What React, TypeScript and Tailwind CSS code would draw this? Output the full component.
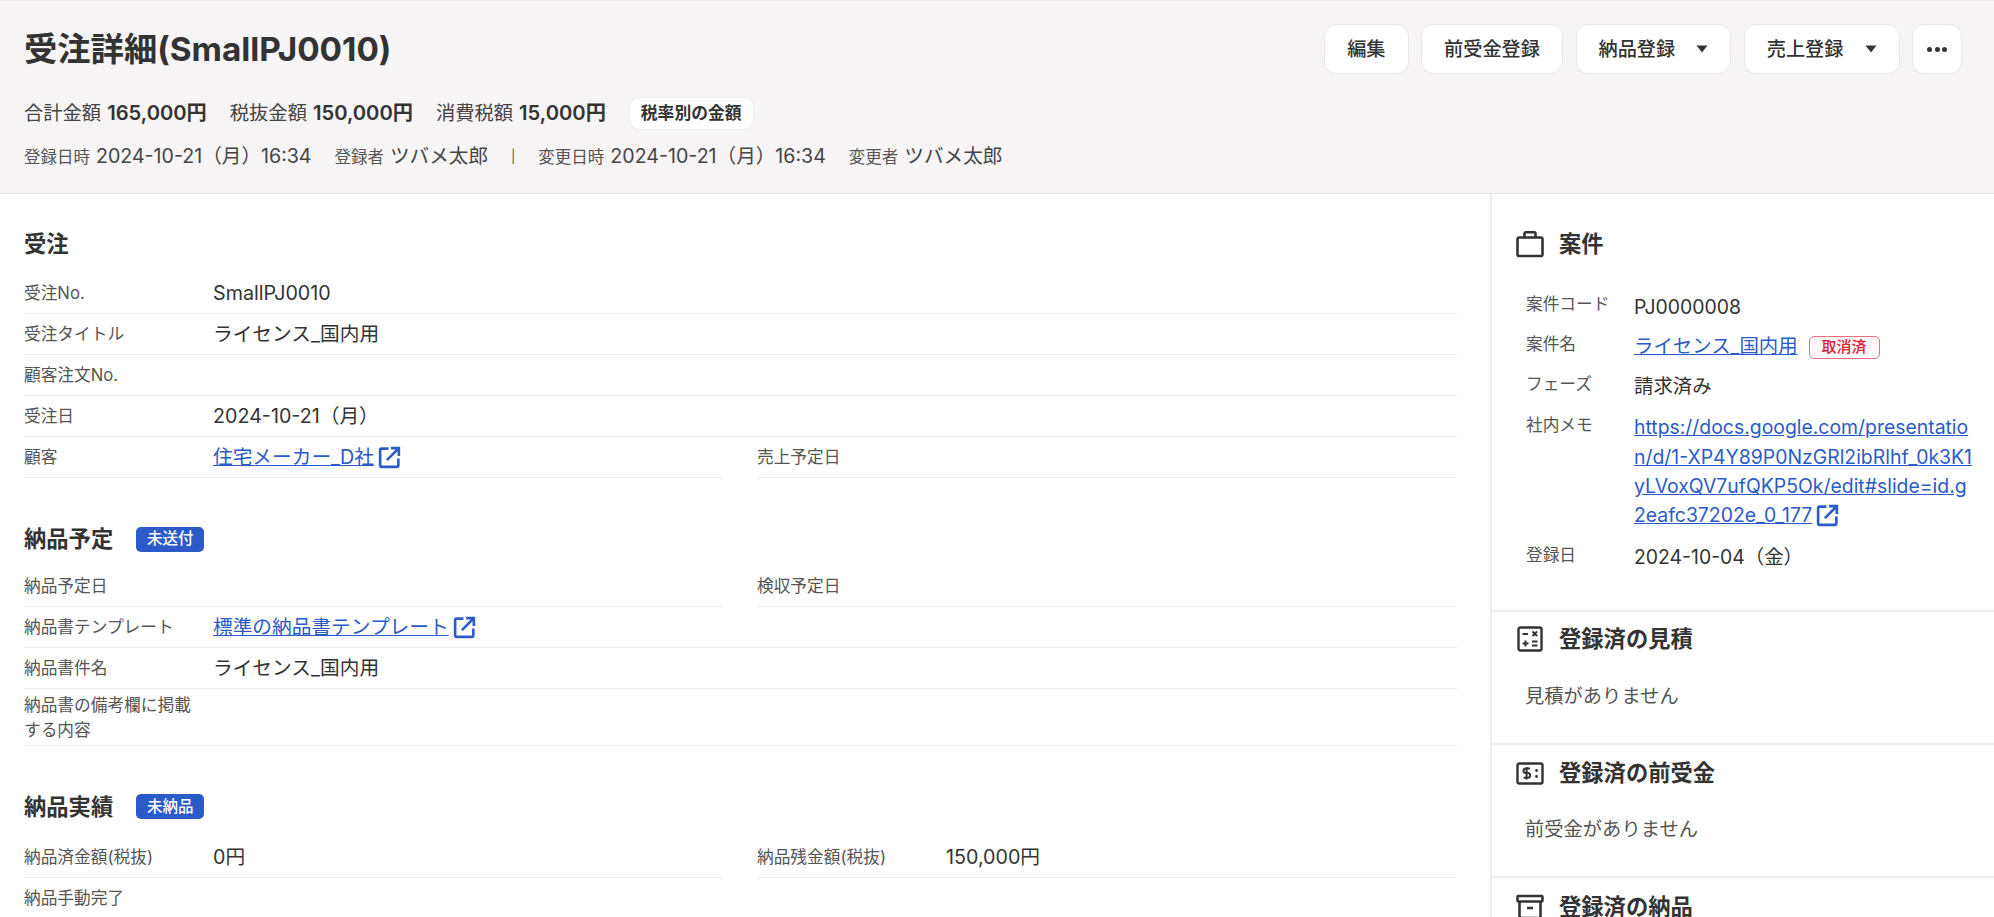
import React from "react";

const External = ({ s = 25 }: { s?: number }) => (
  <svg width={s} height={s} viewBox="0 0 24 24" fill="none" stroke="#2a5bc8" strokeWidth="2.5" className="inline-block shrink-0">
    <path d="M11 3.5H4.5a1.5 1.5 0 0 0-1.5 1.5v14.5A1.5 1.5 0 0 0 4.5 21H19a1.5 1.5 0 0 0 1.5-1.5V13" />
    <path d="M9.5 14.5 20.5 3.5M13.5 3H21v7.5" />
  </svg>
);

const Briefcase = () => (
  <svg width="28" height="28" viewBox="0 0 28 28" fill="none" stroke="#333" strokeWidth="2.6" strokeLinejoin="round">
    <rect x="1.5" y="7.5" width="25" height="18.5" rx="1.8" />
    <path d="M8.5 7.5V3.6a1.4 1.4 0 0 1 1.4-1.4h8.2a1.4 1.4 0 0 1 1.4 1.4v3.9" />
  </svg>
);

const Calc = () => (
  <svg width="28" height="28" viewBox="0 0 28 28" fill="none" stroke="#333" strokeWidth="2" strokeLinejoin="round">
    <rect x="2.5" y="2.5" width="23" height="23" rx="1.8" strokeWidth="2.4" />
    <path d="M6.5 9h5.5M16.5 6.5l4.5 4.5M21 6.5 16.5 11M6.5 18.5h6M9.5 15.5v6M16 16.5h5.5M16 20.5h5.5" strokeWidth="2" />
  </svg>
);

const Money = () => (
  <svg width="28" height="28" viewBox="0 0 28 28" fill="none" stroke="#333" strokeWidth="2.4" strokeLinejoin="round">
    <rect x="1.5" y="4.5" width="25" height="20" rx="1.8" />
    <path d="M14 9.5h-4.2a1.9 1.9 0 0 0 0 4.6h2a1.9 1.9 0 0 1 0 4.6H7.6M10.6 8v12.5" strokeWidth="2" />
    <path d="M20.5 11.5h.1M20.5 17.5h.1" strokeWidth="2.8" strokeLinecap="round" />
  </svg>
);

const Archive = () => (
  <svg width="28" height="28" viewBox="0 0 28 28" fill="none" stroke="#333" strokeWidth="2.6" strokeLinejoin="round">
    <rect x="1.5" y="3" width="25" height="5.5" rx="1" />
    <path d="M3.5 8.5V25h21V8.5M11 15h6" />
  </svg>
);

const Caret = () => (
  <svg width="12" height="8" viewBox="0 0 12 8" className="shrink-0">
    <path d="M0.5 0.5h11L6 7.5z" fill="#333" />
  </svg>
);

const Btn = ({ children, caret }: { children: React.ReactNode; caret?: boolean }) => (
  <button className="flex h-[50px] items-center rounded-[12px] border border-[#e9e7e8] bg-white pl-[22px] pr-[22px] text-[19.2px] font-medium text-[#333]">
    {children}
    {caret && <span className="ml-[21px]"><Caret /></span>}
  </button>
);

const Row = ({ label, children, tall }: { label: React.ReactNode; children?: React.ReactNode; tall?: boolean }) => (
  <div className={`flex items-center border-b border-[#efedee] pt-[2px] ${tall ? "h-[57.5px]" : "h-[41px]"}`}>
    <div className="w-[190px] shrink-0 pr-3 text-[16.7px] leading-[24.7px] text-[#555]">{label}</div>
    <div className="-ml-[1px] text-[19.7px] text-[#333]">{children}</div>
  </div>
);

const Half = ({ left, right }: { left: React.ReactNode; right?: React.ReactNode }) => (
  <div className="grid grid-cols-[699px_699px] gap-x-[34px]">
    {left}
    {right ?? <div />}
  </div>
);

const Badge = ({ children }: { children: React.ReactNode }) => (
  <span className="flex h-[25px] w-[68px] items-center justify-center rounded-[5px] bg-[#2a5bc8] text-[15.5px] font-medium text-white">{children}</span>
);

const Heading = ({ children, badge, cls }: { children: React.ReactNode; badge?: string; cls: string }) => (
  <div className={`flex h-[30px] items-center gap-[23px] ${cls}`}>
    <h2 className="text-[22.3px] font-bold text-[#333]">{children}</h2>
    {badge && <Badge>{badge}</Badge>}
  </div>
);

const Link = ({ children }: { children: React.ReactNode }) => (
  <a className="text-[#2a5bc8] underline">{children}</a>
);

const SideRow = ({ label, children, cls = "" }: { label: string; children: React.ReactNode; cls?: string }) => (
  <div className={`flex ${cls}`}>
    <div className="w-[108px] shrink-0 text-[16.7px] leading-[29.4px] text-[#555]">{label}</div>
    <div className="min-w-0 flex-1 whitespace-nowrap pt-[2.5px] text-[19.4px] leading-[29.4px] text-[#333]">{children}</div>
  </div>
);

const SideHead = ({ icon, children }: { icon: React.ReactNode; children: React.ReactNode }) => (
  <div className="flex h-[30px] items-center gap-[15px] pl-[24px]">
    <span className="flex w-[28px] justify-center">{icon}</span>
    <h3 className="text-[22.3px] font-bold text-[#333]">{children}</h3>
  </div>
);

export default function App() {
  return (
    <div className="h-[917px] w-[1994px] overflow-hidden bg-white font-['Inter','Noto_Sans_CJK_JP',sans-serif]">
      <header className="h-[194px] border-b border-[#e4e2e3] border-t border-t-[#eeecee] bg-[#f6f4f5] pl-6 pr-8 pt-[23px]">
        <div className="flex h-[50px] items-center justify-between">
          <h1 className="pt-[2px] text-[33.3px] font-bold text-[#333]">受注詳細(SmallPJ0010)</h1>
          <div className="flex gap-[12.5px]">
            <Btn>編集</Btn>
            <Btn>前受金登録</Btn>
            <Btn caret>納品登録</Btn>
            <Btn caret>売上登録</Btn>
            <button className="flex h-[50px] w-[50px] items-center justify-center gap-[2.5px] rounded-[12px] border border-[#e9e7e8] bg-white">
              <span className="h-[5px] w-[5px] rounded-full bg-[#333]" />
              <span className="h-[5px] w-[5px] rounded-full bg-[#333]" />
              <span className="h-[5px] w-[5px] rounded-full bg-[#333]" />
            </button>
          </div>
        </div>
        <div className="mt-[23px] flex h-[33px] items-center text-[19.3px] text-[#444]">
          <span>合計金額</span><b className="ml-[6px] text-[20.2px] font-semibold text-[#333]">165,000円</b>
          <span className="ml-[23px]">税抜金額</span><b className="ml-[6px] text-[20.2px] font-semibold text-[#333]">150,000円</b>
          <span className="ml-[23px]">消費税額</span><b className="ml-[6px] text-[20.2px] font-semibold text-[#333]">15,000円</b>
          <span className="ml-[23px] flex h-[33px] items-center rounded-[10px] border border-[#ecebeb] bg-white px-[11px] text-[16.8px] font-semibold text-[#333]">税率別の金額</span>
        </div>
        <div className="mt-[15px] flex h-[24px] items-center text-[19.6px] text-[#444]">
          <span className="text-[16.5px] text-[#555]">登録日時</span><span className="ml-[6px]">2024-10-21（月）16:34</span>
          <span className="ml-[23px] text-[16.5px] text-[#555]">登録者</span><span className="ml-[6px]">ツバメ太郎</span>
          <span className="ml-[23px] text-[13px] text-[#555]">|</span>
          <span className="ml-[23px] text-[16.5px] text-[#555]">変更日時</span><span className="ml-[6px]">2024-10-21（月）16:34</span>
          <span className="ml-[23px] text-[16.5px] text-[#555]">変更者</span><span className="ml-[6px]">ツバメ太郎</span>
        </div>
      </header>
      <div className="flex">
        <main className="w-[1490px] shrink-0 pl-6 pr-[33px] pt-[35px]">
          <Heading cls="mb-[13.75px]">受注</Heading>
          <Row label="受注No.">SmallPJ0010</Row>
          <Row label="受注タイトル">ライセンス_国内用</Row>
          <Row label="顧客注文No." />
          <Row label="受注日">2024-10-21（月）</Row>
          <Half
            left={<Row label="顧客"><span className="flex items-center gap-[3px]"><Link>住宅メーカー_D社</Link><External /></span></Row>}
            right={<Row label="売上予定日" />}
          />
          <Heading badge="未送付" cls="mb-[11.75px] mt-[46.25px]">納品予定</Heading>
          <Half left={<Row label="納品予定日" />} right={<Row label="検収予定日" />} />
          <Row label="納品書テンプレート"><span className="flex items-center gap-[3px]"><Link>標準の納品書テンプレート</Link><External /></span></Row>
          <Row label="納品書件名">ライセンス_国内用</Row>
          <Row tall label={<>納品書の備考欄に掲載<br />する内容</>} />
          <Heading badge="未納品" cls="mb-[14.75px] mt-[45.5px]">納品実績</Heading>
          <Half left={<Row label="納品済金額(税抜)">0円</Row>} right={<Row label="納品残金額(税抜)">150,000円</Row>} />
          <Row label="納品手動完了" />
        </main>
        <aside className="min-w-0 flex-1 border-l-2 border-[#efeeee]">
          <section className="h-[417.5px] border-b-2 border-[#efeeee] pt-[35px]">
            <SideHead icon={<Briefcase />}>案件</SideHead>
            <div className="mt-[31px] flex flex-col gap-[8px] pl-[34px]">
              <SideRow label="案件コード">PJ0000008</SideRow>
              <SideRow label="案件名">
                <span className="flex items-center gap-[11px]">
                  <Link>ライセンス_国内用</Link>
                  <span className="flex h-[23px] w-[71px] items-center justify-center rounded-[5px] border border-[#e8707f] bg-[#fff8f9] text-[15px] font-medium text-[#d9213a]">取消済</span>
                </span>
              </SideRow>
              <SideRow label="フェーズ">請求済み</SideRow>
              <SideRow label="社内メモ" cls="mt-[1px] mb-[2px]">
                <Link>https://docs.google.com/presentatio<br />n/d/1-XP4Y89P0NzGRl2ibRlhf_0k3K1<br />yLVoxQV7ufQKP5Ok/edit#slide=id.g<br />2eafc37202e_0_177</Link>
                <span className="ml-[3px] inline-flex h-[25px] align-[-6px]"><External /></span>
              </SideRow>
              <SideRow label="登録日">2024-10-04（金）</SideRow>
            </div>
          </section>
          <section className="h-[133px] border-b-2 border-[#efeeee] pt-[12px]">
            <SideHead icon={<Calc />}>登録済の見積</SideHead>
            <p className="mt-[28px] pl-[33px] text-[19.3px] leading-[28px] text-[#555]">見積がありません</p>
          </section>
          <section className="h-[133px] border-b-2 border-[#efeeee] pt-[13px]">
            <SideHead icon={<Money />}>登録済の前受金</SideHead>
            <p className="mt-[27px] pl-[33px] text-[19.3px] leading-[28px] text-[#555]">前受金がありません</p>
          </section>
          <section className="pt-[14px]">
            <SideHead icon={<Archive />}>登録済の納品</SideHead>
          </section>
        </aside>
      </div>
    </div>
  );
}
